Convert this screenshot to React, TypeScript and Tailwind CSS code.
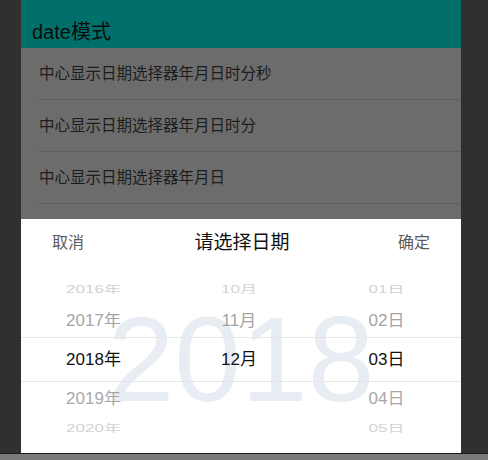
import React from "react";

const font = { fontFamily: '"Liberation Sans", "Noto Sans CJK SC", sans-serif' };

const listItems = [
  "中心显示日期选择器年月日时分秒",
  "中心显示日期选择器年月日时分",
  "中心显示日期选择器年月日",
];

const columns = [
  ["2016年", "2017年", "2018年", "2019年", "2020年"],
  ["10月", "11月", "12月", "01月", "02月"],
  ["01日", "02日", "03日", "04日", "05日"],
];

function Wheel({ items, hideBelow }: { items: string[]; hideBelow?: boolean }) {
  return (
    <div className="flex flex-col">
      <div className="h-[30px] flex items-center justify-center text-[17px] text-[#d2d2d2] scale-y-[0.6]">
        {items[0]}
      </div>
      <div className="h-[32px] flex items-center justify-center text-[17px] text-[#a4a4a4] scale-y-[0.92]">
        {items[1]}
      </div>
      <div className="h-[45px] flex items-center justify-center text-[17px] text-[#111] border-y border-[#e6e6e6]">
        {items[2]}
      </div>
      <div className="h-[34px] flex items-center justify-center text-[17px] text-[#a8a8a8] scale-y-[0.92]">
        {hideBelow ? "" : items[3]}
      </div>
      <div className="h-[26px] flex items-center justify-center text-[17px] text-[#d2d2d2] scale-y-[0.6]">
        {hideBelow ? "" : items[4]}
      </div>
    </div>
  );
}

export default function App() {
  return (
    <div className="w-[488px] h-[460px] flex flex-col bg-[#303030] overflow-hidden" style={font}>
      <div className="flex h-[453px]">
        <div className="w-[21px] bg-[#303030]" />
        <div className="w-[440px] flex flex-col">
          <div className="h-[48px] bg-[#01706b] pt-[15px] pl-[11px] flex items-center text-[20px] text-[#0c0c0c]">
            date模式
          </div>
          <div className="h-[171px] bg-[#6c6c6c] flex flex-col">
            {listItems.map((t) => (
              <div key={t} className="h-[52px] ml-[18px] border-b border-[#5e5e5e] flex items-center text-[15.5px] text-[#1c1c1c]">
                {t}
              </div>
            ))}
          </div>
          <div className="relative flex-1 bg-white flex flex-col">
            <div className="absolute left-0 right-0 top-[80px] text-center text-[120px] leading-none text-[#e8ecf3]">
              2018
            </div>
            <div className="relative h-[48px] flex items-center justify-between px-[31px]">
              <span className="text-[16px] text-[#5a5a5a]">取消</span>
              <span className="text-[19px] text-[#111] pl-[2px]">请选择日期</span>
              <span className="text-[16px] text-[#5a5a5a]">确定</span>
            </div>
            <div className="relative mt-[8px] grid grid-cols-[145px_146px_149px]">
              <Wheel items={columns[0]} />
              <Wheel items={columns[1]} hideBelow />
              <Wheel items={columns[2]} />
            </div>
          </div>
        </div>
        <div className="flex-1 bg-[#303030]" />
      </div>
      <div className="h-[7px] border-t border-[#1a1a1a] bg-[#7a7a7a]" />
    </div>
  );
}
